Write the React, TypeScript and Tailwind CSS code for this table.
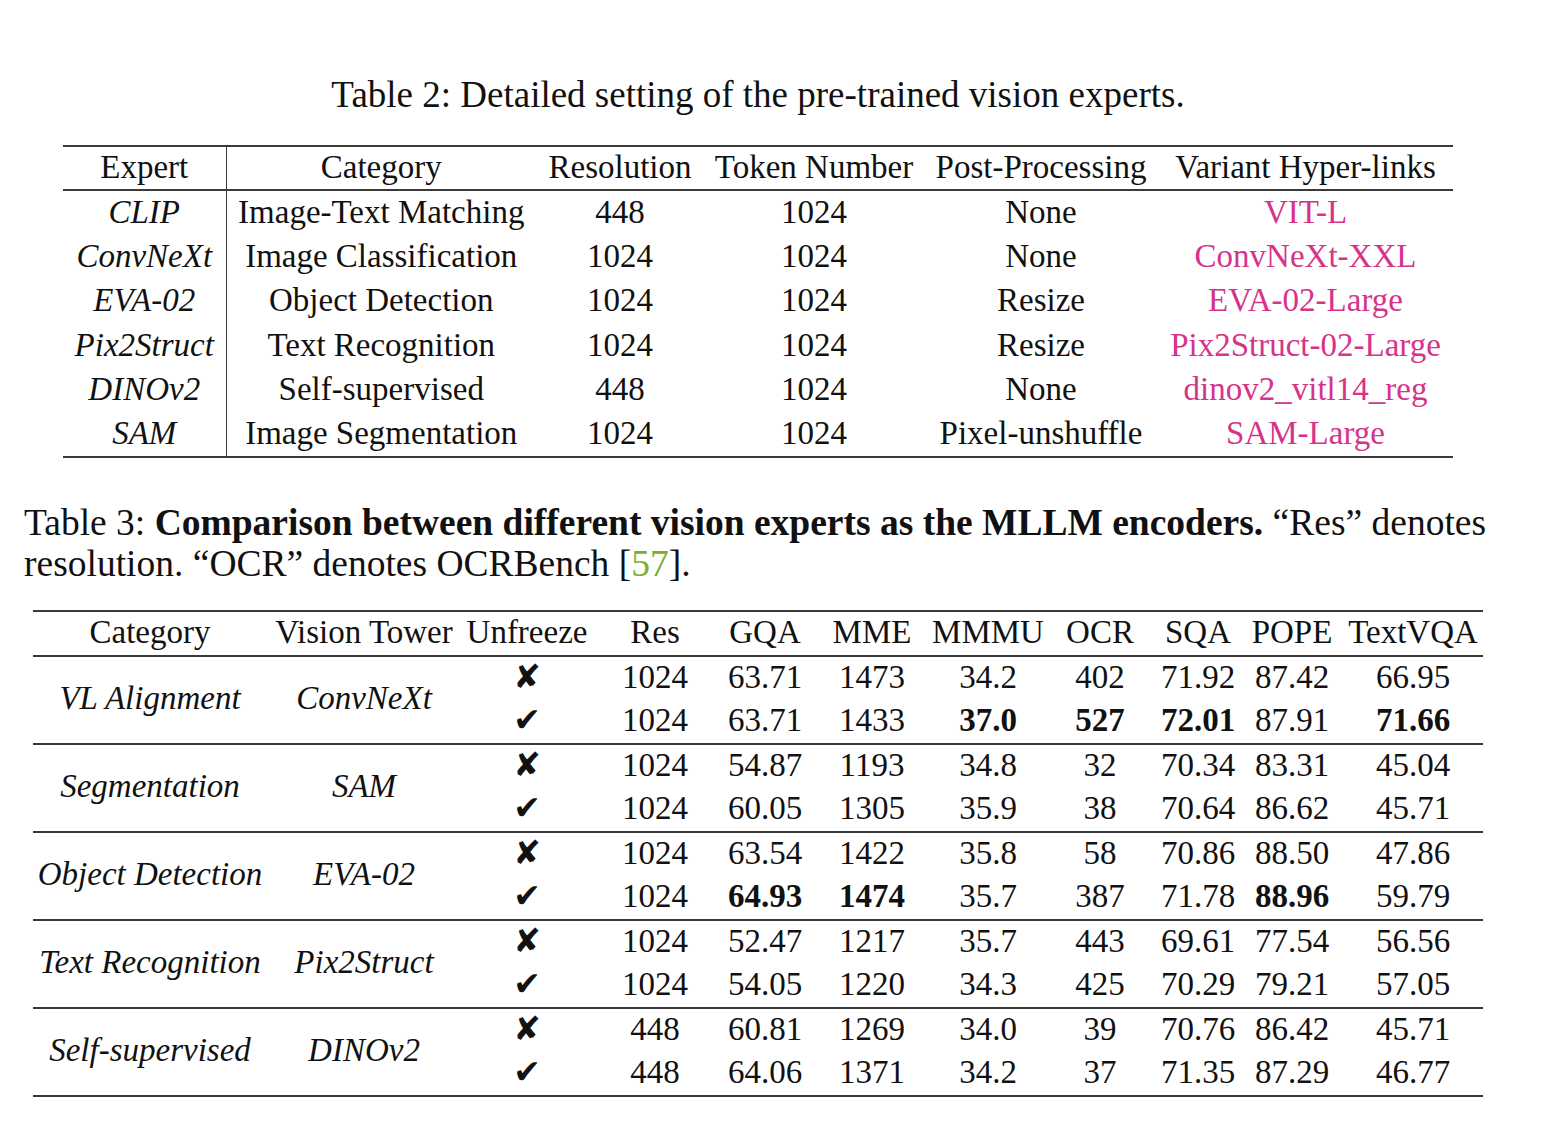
const serif = { fontFamily: '"Liberation Serif", "Times New Roman", serif' };
const dingbat = { fontFamily: '"DejaVu Sans", sans-serif' };

const experts = [
  ['CLIP', 'Image-Text Matching', '448', '1024', 'None', 'VIT-L'],
  ['ConvNeXt', 'Image Classification', '1024', '1024', 'None', 'ConvNeXt-XXL'],
  ['EVA-02', 'Object Detection', '1024', '1024', 'Resize', 'EVA-02-Large'],
  ['Pix2Struct', 'Text Recognition', '1024', '1024', 'Resize', 'Pix2Struct-02-Large'],
  ['DINOv2', 'Self-supervised', '448', '1024', 'None', 'dinov2_vitl14_reg'],
  ['SAM', 'Image Segmentation', '1024', '1024', 'Pixel-unshuffle', 'SAM-Large'],
];

type Cell = string | { v: string; b: true };

const groups: { cat: string; tower: string; rows: Cell[][] }[] = [
  {
    cat: 'VL Alignment',
    tower: 'ConvNeXt',
    rows: [
      ['1024', '63.71', '1473', '34.2', '402', '71.92', '87.42', '66.95'],
      ['1024', '63.71', '1433', { v: '37.0', b: true }, { v: '527', b: true }, { v: '72.01', b: true }, '87.91', { v: '71.66', b: true }],
    ],
  },
  {
    cat: 'Segmentation',
    tower: 'SAM',
    rows: [
      ['1024', '54.87', '1193', '34.8', '32', '70.34', '83.31', '45.04'],
      ['1024', '60.05', '1305', '35.9', '38', '70.64', '86.62', '45.71'],
    ],
  },
  {
    cat: 'Object Detection',
    tower: 'EVA-02',
    rows: [
      ['1024', '63.54', '1422', '35.8', '58', '70.86', '88.50', '47.86'],
      ['1024', { v: '64.93', b: true }, { v: '1474', b: true }, '35.7', '387', '71.78', { v: '88.96', b: true }, '59.79'],
    ],
  },
  {
    cat: 'Text Recognition',
    tower: 'Pix2Struct',
    rows: [
      ['1024', '52.47', '1217', '35.7', '443', '69.61', '77.54', '56.56'],
      ['1024', '54.05', '1220', '34.3', '425', '70.29', '79.21', '57.05'],
    ],
  },
  {
    cat: 'Self-supervised',
    tower: 'DINOv2',
    rows: [
      ['448', '60.81', '1269', '34.0', '39', '70.76', '86.42', '45.71'],
      ['448', '64.06', '1371', '34.2', '37', '71.35', '87.29', '46.77'],
    ],
  },
];

const t2widths = [163, 310, 168, 220, 234, 295];
const t3widths = [234, 194, 132, 124, 96, 118, 114, 110, 86, 102, 140];
const t3head = ['Category', 'Vision Tower', 'Unfreeze', 'Res', 'GQA', 'MME', 'MMMU', 'OCR', 'SQA', 'POPE', 'TextVQA'];

export default function App() {
  return (
    <div className="min-h-screen w-[1558px] bg-white text-[#111]" style={serif}>
      <div className="pt-[73px] pl-[63px]">
        <div className="w-[1390px] h-[44px] text-[37px] leading-[44px] text-center whitespace-nowrap">
          Table 2: Detailed setting of the pre-trained vision experts.
        </div>
        <table className="mt-[28px] w-[1390px] table-fixed border-collapse text-[33px] leading-[36px]">
          <colgroup>
            {t2widths.map((w, i) => (
              <col key={i} style={{ width: w }} />
            ))}
          </colgroup>
          <thead>
            <tr className="border-t-2 border-b-2 border-[#3a3a3a]">
              {['Expert', 'Category', 'Resolution', 'Token Number', 'Post-Processing', 'Variant Hyper-links'].map((h, i) => (
                <th
                  key={h}
                  className={`h-[44px] p-0 pb-[3px] text-center font-normal whitespace-nowrap ${i === 0 ? 'border-r border-[#3a3a3a]' : ''}`}
                >
                  {h}
                </th>
              ))}
            </tr>
          </thead>
          <tbody>
            {experts.map((r, ri) => (
              <tr key={r[0]} className={ri === experts.length - 1 ? 'border-b-2 border-[#3a3a3a]' : ''}>
                {r.map((c, i) => (
                  <td
                    key={i}
                    className={`h-[44.5px] p-0 pb-[2px] text-center whitespace-nowrap ${i === 0 ? 'italic border-r border-[#3a3a3a]' : ''} ${i === 5 ? 'text-[#d6338a]' : ''}`}
                  >
                    {c}
                  </td>
                ))}
              </tr>
            ))}
          </tbody>
        </table>
      </div>

      <div className="mt-[44px] pl-[24px] w-[1530px] text-[37.5px] leading-[41px] whitespace-nowrap">
        Table 3: <b>Comparison between different vision experts as the MLLM encoders.</b> “Res” denotes
        <br />
        resolution. “OCR” denotes OCRBench [<span className="text-[#78b02e]">57</span>].
      </div>

      <div className="pl-[33px] mt-[26px] pb-[40px]">
        <table className="w-[1450px] table-fixed border-collapse text-[33px] leading-[36px]">
          <colgroup>
            {t3widths.map((w, i) => (
              <col key={i} style={{ width: w }} />
            ))}
          </colgroup>
          <thead>
            <tr className="border-t-2 border-b-2 border-[#3a3a3a]">
              {t3head.map((h) => (
                <th key={h} className="h-[45px] p-0 pb-[4px] text-center font-normal whitespace-nowrap">
                  {h}
                </th>
              ))}
            </tr>
          </thead>
          {groups.map((g) => (
            <tbody key={g.cat} className="border-b-2 border-[#3a3a3a]">
              {g.rows.map((row, ri) => (
                <tr key={ri}>
                  {ri === 0 && (
                    <>
                      <td rowSpan={2} className="p-0 pb-[4px] text-center italic whitespace-nowrap">
                        {g.cat}
                      </td>
                      <td rowSpan={2} className="p-0 pb-[4px] text-center italic whitespace-nowrap">
                        {g.tower}
                      </td>
                    </>
                  )}
                  <td className="h-[44px] p-0 pb-[3px] text-center text-[33px]" style={dingbat}>
                    {ri === 0 ? '✘' : '✔'}
                  </td>
                  {row.map((c, ci) => {
                    const bold = typeof c !== 'string';
                    const v = typeof c === 'string' ? c : c.v;
                    return (
                      <td key={ci} className={`p-0 pb-[4px] text-center whitespace-nowrap ${bold ? 'font-bold' : ''}`}>
                        {v}
                      </td>
                    );
                  })}
                </tr>
              ))}
            </tbody>
          ))}
        </table>
      </div>
    </div>
  );
}
